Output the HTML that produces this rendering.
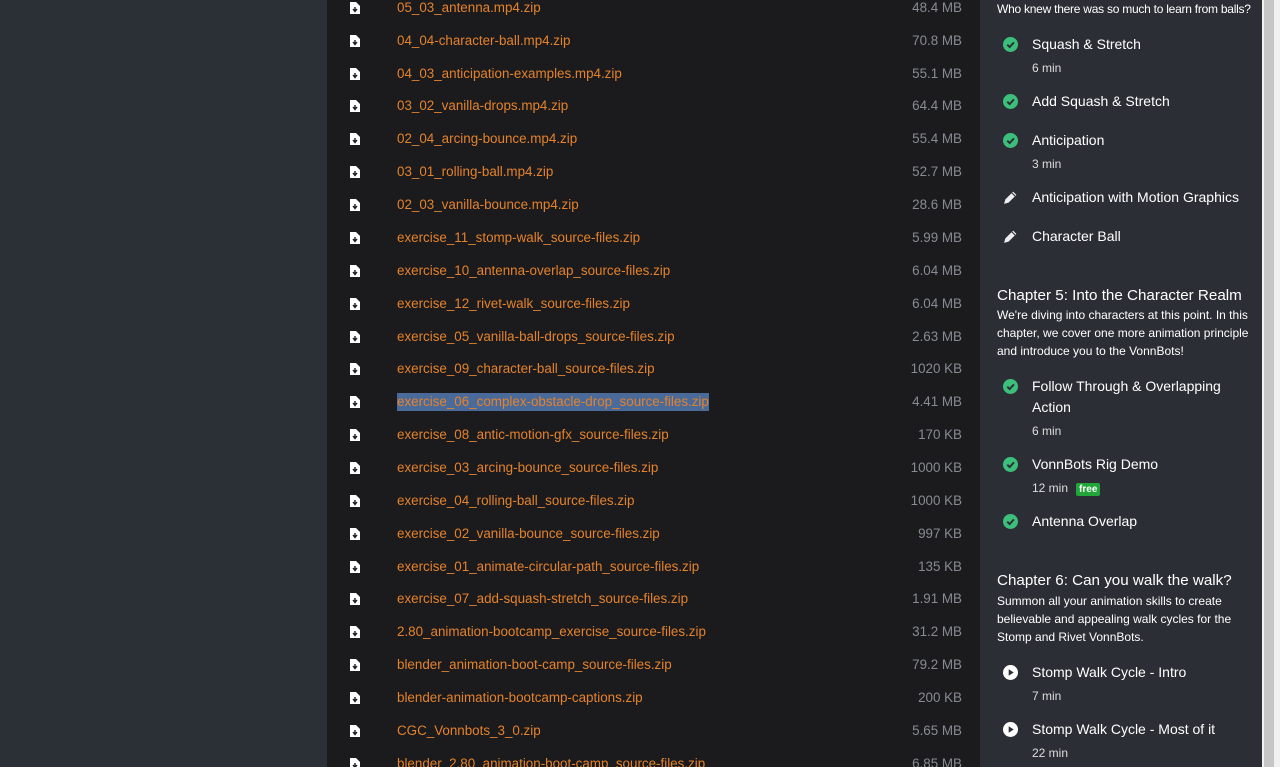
<!DOCTYPE html>
<html><head><meta charset="utf-8"><style>
*{margin:0;padding:0;box-sizing:border-box}
html,body{width:1280px;height:767px;overflow:hidden}
body{background:#2b2f36;font-family:"Liberation Sans",sans-serif;position:relative}
#main{position:absolute;left:327px;top:0;width:653px;height:767px;background:#1b1b1d}
#side{position:absolute;left:980px;top:0;width:282px;height:767px;background:#2b2e35;color:#fff}
#sb{position:absolute;left:1262px;top:0;width:18px;height:767px;background:#f1f1f1}
#sb div{position:absolute;left:2px;top:0;width:10px;height:767px;background:#c6c6c6}
.row{position:absolute;left:0;width:653px;height:20px}
.row svg{position:absolute;left:23px;top:3px}
.row .n{position:absolute;left:70px;top:0;color:#e4822b;font-size:13.4px;line-height:18px;white-space:nowrap}
.row .s{position:absolute;right:18px;top:0;color:#878b92;font-size:13.4px;line-height:18px}
.hl{background:#4a6b9a}
.t{position:absolute;left:52px;font-size:14px;line-height:20px;white-space:nowrap}
.m{position:absolute;left:52px;font-size:12px;color:#ddd}
.ic{position:absolute;left:23px;width:15px;height:15px}
.h{position:absolute;left:17px;font-size:15.2px;white-space:nowrap}
.d{position:absolute;left:17px;font-size:12px;line-height:18px;width:262px}
.free{display:inline-block;background:#22a63a;color:#fff;font-size:10px;font-weight:bold;padding:1px 3px;margin-left:8px;border-radius:2px}
</style></head><body>
<div id="main">
<div class="row" style="top:-1px"><svg width="10" height="12"><path d="M0 0h6l4 4v8H0z" fill="#fff"/><path d="M5 5v4M3 7l2 2.5 2-2.5" stroke="#1b1b1d" stroke-width="1.4" fill="none"/></svg><span class="n">05_03_antenna.mp4.zip</span><span class="s">48.4 MB</span></div>
<div class="row" style="top:32px"><svg width="10" height="12"><path d="M0 0h6l4 4v8H0z" fill="#fff"/><path d="M5 5v4M3 7l2 2.5 2-2.5" stroke="#1b1b1d" stroke-width="1.4" fill="none"/></svg><span class="n">04_04-character-ball.mp4.zip</span><span class="s">70.8 MB</span></div>
<div class="row" style="top:65px"><svg width="10" height="12"><path d="M0 0h6l4 4v8H0z" fill="#fff"/><path d="M5 5v4M3 7l2 2.5 2-2.5" stroke="#1b1b1d" stroke-width="1.4" fill="none"/></svg><span class="n">04_03_anticipation-examples.mp4.zip</span><span class="s">55.1 MB</span></div>
<div class="row" style="top:97px"><svg width="10" height="12"><path d="M0 0h6l4 4v8H0z" fill="#fff"/><path d="M5 5v4M3 7l2 2.5 2-2.5" stroke="#1b1b1d" stroke-width="1.4" fill="none"/></svg><span class="n">03_02_vanilla-drops.mp4.zip</span><span class="s">64.4 MB</span></div>
<div class="row" style="top:130px"><svg width="10" height="12"><path d="M0 0h6l4 4v8H0z" fill="#fff"/><path d="M5 5v4M3 7l2 2.5 2-2.5" stroke="#1b1b1d" stroke-width="1.4" fill="none"/></svg><span class="n">02_04_arcing-bounce.mp4.zip</span><span class="s">55.4 MB</span></div>
<div class="row" style="top:163px"><svg width="10" height="12"><path d="M0 0h6l4 4v8H0z" fill="#fff"/><path d="M5 5v4M3 7l2 2.5 2-2.5" stroke="#1b1b1d" stroke-width="1.4" fill="none"/></svg><span class="n">03_01_rolling-ball.mp4.zip</span><span class="s">52.7 MB</span></div>
<div class="row" style="top:196px"><svg width="10" height="12"><path d="M0 0h6l4 4v8H0z" fill="#fff"/><path d="M5 5v4M3 7l2 2.5 2-2.5" stroke="#1b1b1d" stroke-width="1.4" fill="none"/></svg><span class="n">02_03_vanilla-bounce.mp4.zip</span><span class="s">28.6 MB</span></div>
<div class="row" style="top:229px"><svg width="10" height="12"><path d="M0 0h6l4 4v8H0z" fill="#fff"/><path d="M5 5v4M3 7l2 2.5 2-2.5" stroke="#1b1b1d" stroke-width="1.4" fill="none"/></svg><span class="n">exercise_11_stomp-walk_source-files.zip</span><span class="s">5.99 MB</span></div>
<div class="row" style="top:262px"><svg width="10" height="12"><path d="M0 0h6l4 4v8H0z" fill="#fff"/><path d="M5 5v4M3 7l2 2.5 2-2.5" stroke="#1b1b1d" stroke-width="1.4" fill="none"/></svg><span class="n">exercise_10_antenna-overlap_source-files.zip</span><span class="s">6.04 MB</span></div>
<div class="row" style="top:295px"><svg width="10" height="12"><path d="M0 0h6l4 4v8H0z" fill="#fff"/><path d="M5 5v4M3 7l2 2.5 2-2.5" stroke="#1b1b1d" stroke-width="1.4" fill="none"/></svg><span class="n">exercise_12_rivet-walk_source-files.zip</span><span class="s">6.04 MB</span></div>
<div class="row" style="top:328px"><svg width="10" height="12"><path d="M0 0h6l4 4v8H0z" fill="#fff"/><path d="M5 5v4M3 7l2 2.5 2-2.5" stroke="#1b1b1d" stroke-width="1.4" fill="none"/></svg><span class="n">exercise_05_vanilla-ball-drops_source-files.zip</span><span class="s">2.63 MB</span></div>
<div class="row" style="top:360px"><svg width="10" height="12"><path d="M0 0h6l4 4v8H0z" fill="#fff"/><path d="M5 5v4M3 7l2 2.5 2-2.5" stroke="#1b1b1d" stroke-width="1.4" fill="none"/></svg><span class="n">exercise_09_character-ball_source-files.zip</span><span class="s">1020 KB</span></div>
<div class="row" style="top:393px"><svg width="10" height="12"><path d="M0 0h6l4 4v8H0z" fill="#fff"/><path d="M5 5v4M3 7l2 2.5 2-2.5" stroke="#1b1b1d" stroke-width="1.4" fill="none"/></svg><span class="n hl">exercise_06_complex-obstacle-drop_source-files.zip</span><span class="s">4.41 MB</span></div>
<div class="row" style="top:426px"><svg width="10" height="12"><path d="M0 0h6l4 4v8H0z" fill="#fff"/><path d="M5 5v4M3 7l2 2.5 2-2.5" stroke="#1b1b1d" stroke-width="1.4" fill="none"/></svg><span class="n">exercise_08_antic-motion-gfx_source-files.zip</span><span class="s">170 KB</span></div>
<div class="row" style="top:459px"><svg width="10" height="12"><path d="M0 0h6l4 4v8H0z" fill="#fff"/><path d="M5 5v4M3 7l2 2.5 2-2.5" stroke="#1b1b1d" stroke-width="1.4" fill="none"/></svg><span class="n">exercise_03_arcing-bounce_source-files.zip</span><span class="s">1000 KB</span></div>
<div class="row" style="top:492px"><svg width="10" height="12"><path d="M0 0h6l4 4v8H0z" fill="#fff"/><path d="M5 5v4M3 7l2 2.5 2-2.5" stroke="#1b1b1d" stroke-width="1.4" fill="none"/></svg><span class="n">exercise_04_rolling-ball_source-files.zip</span><span class="s">1000 KB</span></div>
<div class="row" style="top:525px"><svg width="10" height="12"><path d="M0 0h6l4 4v8H0z" fill="#fff"/><path d="M5 5v4M3 7l2 2.5 2-2.5" stroke="#1b1b1d" stroke-width="1.4" fill="none"/></svg><span class="n">exercise_02_vanilla-bounce_source-files.zip</span><span class="s">997 KB</span></div>
<div class="row" style="top:558px"><svg width="10" height="12"><path d="M0 0h6l4 4v8H0z" fill="#fff"/><path d="M5 5v4M3 7l2 2.5 2-2.5" stroke="#1b1b1d" stroke-width="1.4" fill="none"/></svg><span class="n">exercise_01_animate-circular-path_source-files.zip</span><span class="s">135 KB</span></div>
<div class="row" style="top:590px"><svg width="10" height="12"><path d="M0 0h6l4 4v8H0z" fill="#fff"/><path d="M5 5v4M3 7l2 2.5 2-2.5" stroke="#1b1b1d" stroke-width="1.4" fill="none"/></svg><span class="n">exercise_07_add-squash-stretch_source-files.zip</span><span class="s">1.91 MB</span></div>
<div class="row" style="top:623px"><svg width="10" height="12"><path d="M0 0h6l4 4v8H0z" fill="#fff"/><path d="M5 5v4M3 7l2 2.5 2-2.5" stroke="#1b1b1d" stroke-width="1.4" fill="none"/></svg><span class="n">2.80_animation-bootcamp_exercise_source-files.zip</span><span class="s">31.2 MB</span></div>
<div class="row" style="top:656px"><svg width="10" height="12"><path d="M0 0h6l4 4v8H0z" fill="#fff"/><path d="M5 5v4M3 7l2 2.5 2-2.5" stroke="#1b1b1d" stroke-width="1.4" fill="none"/></svg><span class="n">blender_animation-boot-camp_source-files.zip</span><span class="s">79.2 MB</span></div>
<div class="row" style="top:689px"><svg width="10" height="12"><path d="M0 0h6l4 4v8H0z" fill="#fff"/><path d="M5 5v4M3 7l2 2.5 2-2.5" stroke="#1b1b1d" stroke-width="1.4" fill="none"/></svg><span class="n">blender-animation-bootcamp-captions.zip</span><span class="s">200 KB</span></div>
<div class="row" style="top:722px"><svg width="10" height="12"><path d="M0 0h6l4 4v8H0z" fill="#fff"/><path d="M5 5v4M3 7l2 2.5 2-2.5" stroke="#1b1b1d" stroke-width="1.4" fill="none"/></svg><span class="n">CGC_Vonnbots_3_0.zip</span><span class="s">5.65 MB</span></div>
<div class="row" style="top:755px"><svg width="10" height="12"><path d="M0 0h6l4 4v8H0z" fill="#fff"/><path d="M5 5v4M3 7l2 2.5 2-2.5" stroke="#1b1b1d" stroke-width="1.4" fill="none"/></svg><span class="n">blender_2.80_animation-boot-camp_source-files.zip</span><span class="s">6.85 MB</span></div>
</div>

<div id="side">
<div class="d" style="top:0;white-space:nowrap;letter-spacing:-0.25px;width:auto">Who knew there was so much to learn from balls?</div>

<svg class="ic" style="top:37px" viewBox="0 0 14 14"><circle cx="7" cy="7" r="7" fill="#3dbf7c"/><path d="M4 7.2l2.2 2.2L10.2 5" stroke="#2b2e35" stroke-width="1.8" fill="none"/></svg>
<div class="t" style="top:34px">Squash &amp; Stretch</div><div class="m" style="top:61px">6 min</div>

<svg class="ic" style="top:94px" viewBox="0 0 14 14"><circle cx="7" cy="7" r="7" fill="#3dbf7c"/><path d="M4 7.2l2.2 2.2L10.2 5" stroke="#2b2e35" stroke-width="1.8" fill="none"/></svg>
<div class="t" style="top:91px">Add Squash &amp; Stretch</div>

<svg class="ic" style="top:133px" viewBox="0 0 14 14"><circle cx="7" cy="7" r="7" fill="#3dbf7c"/><path d="M4 7.2l2.2 2.2L10.2 5" stroke="#2b2e35" stroke-width="1.8" fill="none"/></svg>
<div class="t" style="top:130px">Anticipation</div><div class="m" style="top:157px">3 min</div>

<svg class="ic" style="top:190px" viewBox="0 0 14 14"><path d="M1 13l1.2-4.2 7.3-7.3 3 3-7.3 7.3z" fill="#eee"/><path d="M8.3 2.7l3 3" stroke="#2b2e35" stroke-width="1"/></svg>
<div class="t" style="top:187px">Anticipation with Motion Graphics</div>

<svg class="ic" style="top:229px" viewBox="0 0 14 14"><path d="M1 13l1.2-4.2 7.3-7.3 3 3-7.3 7.3z" fill="#eee"/><path d="M8.3 2.7l3 3" stroke="#2b2e35" stroke-width="1"/></svg>
<div class="t" style="top:226px">Character Ball</div>

<div class="h" style="top:287px">Chapter 5: Into the Character Realm</div>
<div class="d" style="top:306px">We're diving into characters at this point. In this chapter, we cover one more animation principle and introduce you to the VonnBots!</div>

<svg class="ic" style="top:379px" viewBox="0 0 14 14"><circle cx="7" cy="7" r="7" fill="#3dbf7c"/><path d="M4 7.2l2.2 2.2L10.2 5" stroke="#2b2e35" stroke-width="1.8" fill="none"/></svg>
<div class="t" style="top:376px;white-space:normal;width:200px;line-height:21px">Follow Through &amp; Overlapping Action</div><div class="m" style="top:424px">6 min</div>

<svg class="ic" style="top:457px" viewBox="0 0 14 14"><circle cx="7" cy="7" r="7" fill="#3dbf7c"/><path d="M4 7.2l2.2 2.2L10.2 5" stroke="#2b2e35" stroke-width="1.8" fill="none"/></svg>
<div class="t" style="top:454px">VonnBots Rig Demo</div><div class="m" style="top:481px">12 min<span class="free">free</span></div>

<svg class="ic" style="top:514px" viewBox="0 0 14 14"><circle cx="7" cy="7" r="7" fill="#3dbf7c"/><path d="M4 7.2l2.2 2.2L10.2 5" stroke="#2b2e35" stroke-width="1.8" fill="none"/></svg>
<div class="t" style="top:511px">Antenna Overlap</div>

<div class="h" style="top:572px">Chapter 6: Can you walk the walk?</div>
<div class="d" style="top:592px">Summon all your animation skills to create believable and appealing walk cycles for the Stomp and Rivet VonnBots.</div>

<svg class="ic" style="top:665px" viewBox="0 0 14 14"><circle cx="7" cy="7" r="7" fill="#fff"/><path d="M5.3 4v6l4.7-3z" fill="#2b2e35"/></svg>
<div class="t" style="top:662px">Stomp Walk Cycle - Intro</div><div class="m" style="top:689px">7 min</div>

<svg class="ic" style="top:722px" viewBox="0 0 14 14"><circle cx="7" cy="7" r="7" fill="#fff"/><path d="M5.3 4v6l4.7-3z" fill="#2b2e35"/></svg>
<div class="t" style="top:719px">Stomp Walk Cycle - Most of it</div><div class="m" style="top:746px">22 min</div>
</div>
<div id="sb"><div></div></div>
</body></html>
